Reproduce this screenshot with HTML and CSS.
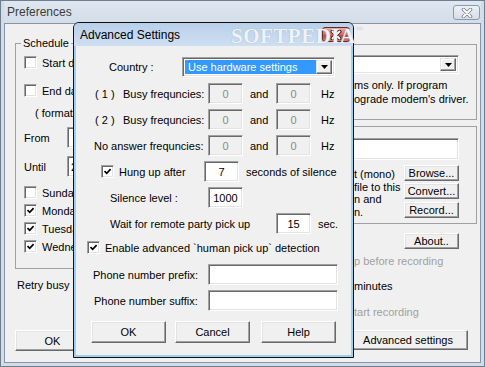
FILE: index.html
```html
<!DOCTYPE html>
<html>
<head>
  <title>Preferences</title>
  <link rel="stylesheet" href="styles.css">
</head>
<body>
  <!-- janela principal -->
  <div class="win main-win">
    <div class="titlebar">
      <span class="title title-off">Preferences</span>
      <span class="close close-off">
        <svg width="14" height="10" viewBox="0 0 14 10"><path d="M3.5 1.5 L10.5 8.5 M10.5 1.5 L3.5 8.5" stroke="#7d8794" stroke-width="3.6" stroke-linecap="round"/><path d="M3.5 1.5 L10.5 8.5 M10.5 1.5 L3.5 8.5" stroke="#fff" stroke-width="1.8" stroke-linecap="round"/></svg>
      </span>
    </div>
    <div class="win-body">
      <div class="cols">
        <div class="col-left">
          <fieldset class="group schedule">
            <legend>Schedule</legend>
            <div class="srow r-start"><span class="cb"></span><span class="lbl">Start date</span></div>
            <div class="srow r-end"><span class="cb"></span><span class="lbl">End date</span></div>
            <div class="srow r-format">( format</div>
            <div class="srow r-from"><span class="time-lbl">From</span><input class="field time" type="text" value=""></div>
            <div class="srow r-until"><span class="time-lbl">Until</span><input class="field time" type="text" value="23:59"></div>
            <div class="srow r-day"><span class="cb"></span><span class="lbl">Sunday</span></div>
            <div class="srow r-day2"><span class="cb"><svg width="7" height="7" viewBox="0 0 7 7"><path d="M0.5 3 L2.7 5.3 L6.6 1.2" fill="none" stroke="#000" stroke-width="1.7"/></svg></span><span class="lbl">Monday</span></div>
            <div class="srow r-day2"><span class="cb"><svg width="7" height="7" viewBox="0 0 7 7"><path d="M0.5 3 L2.7 5.3 L6.6 1.2" fill="none" stroke="#000" stroke-width="1.7"/></svg></span><span class="lbl">Tuesday</span></div>
            <div class="srow r-day2"><span class="cb"><svg width="7" height="7" viewBox="0 0 7 7"><path d="M0.5 3 L2.7 5.3 L6.6 1.2" fill="none" stroke="#000" stroke-width="1.7"/></svg></span><span class="lbl">Wednesday</span></div>
          </fieldset>
          <div class="retry">Retry busy</div>
        </div>

        <div class="col-right">
          <fieldset class="group modem">
            <div class="combo combo-modem">
              <span class="combo-val"></span>
              <span class="combo-arrow"><svg width="7" height="4" viewBox="0 0 7 4"><path d="M0 0 H7 L3.5 4 Z" fill="#000"/></svg></span>
            </div>
            <div class="note">
              <div>ms only. If program</div>
              <div>ograde modem's driver.</div>
            </div>
          </fieldset>
          <fieldset class="group sound">
            <input class="field wide" type="text" value="">
            <div class="sound-row">
              <div class="sound-text">
                <div>t (mono)</div>
                <div>file to this</div>
                <div>n and</div>
                <div>n.</div>
              </div>
              <div class="sound-btns">
                <button class="btn small b-browse">Browse...</button>
                <button class="btn small b-convert">Convert...</button>
                <button class="btn small b-record">Record...</button>
              </div>
            </div>
          </fieldset>
          <div class="about-row"><button class="btn small">About..</button></div>
          <div class="opt opt1 off">p before recording</div>
          <div class="opt opt2">minutes</div>
          <div class="opt opt3 off">tart recording</div>
        </div>
      </div>
      <div class="bottom-row">
        <button class="btn main-ok">OK</button>
        <button class="btn adv">Advanced settings</button>
      </div>
    </div>
  </div>

  <!-- dialogo de configuracoes avancadas -->
  <div class="win dialog">
    <div class="dlg-title">
      <span class="title">Advanced Settings</span>
      <span class="mark">SOFTPEDIA<sup>™</sup></span>
      <span class="close close-on">
        <svg width="14" height="10" viewBox="0 0 14 10"><path d="M3.5 1.5 L10.5 8.5 M10.5 1.5 L3.5 8.5" stroke="#4a1410" stroke-width="3.8" stroke-linecap="round"/><path d="M3.5 1.5 L10.5 8.5 M10.5 1.5 L3.5 8.5" stroke="#fff" stroke-width="2" stroke-linecap="round"/></svg>
      </span>
    </div>
    <div class="dlg-body">
      <div class="drow d-country">
        <span class="c-lbl">Country :</span>
        <div class="combo combo-country">
          <span class="combo-val sel">Use hardware settings</span>
          <span class="combo-arrow"><svg width="7" height="4" viewBox="0 0 7 4"><path d="M0 0 H7 L3.5 4 Z" fill="#000"/></svg></span>
        </div>
      </div>
      <div class="drow d-freq first">
        <span class="num">( 1 )</span><span class="f-lbl">Busy frequncies:</span>
        <input class="field sm" type="text" value="0" disabled>
        <span class="and">and</span>
        <input class="field sm" type="text" value="0" disabled>
        <span class="unit">Hz</span>
      </div>
      <div class="drow d-freq">
        <span class="num">( 2 )</span><span class="f-lbl">Busy frequncies:</span>
        <input class="field sm" type="text" value="0" disabled>
        <span class="and">and</span>
        <input class="field sm" type="text" value="0" disabled>
        <span class="unit">Hz</span>
      </div>
      <div class="drow d-noans">
        <span class="na-lbl">No answer frequncies:</span>
        <input class="field sm" type="text" value="0" disabled>
        <span class="and">and</span>
        <input class="field sm" type="text" value="0" disabled>
        <span class="unit">Hz</span>
      </div>
      <div class="drow d-hung">
        <span class="cb"><svg width="7" height="7" viewBox="0 0 7 7"><path d="M0.5 3 L2.7 5.3 L6.6 1.2" fill="none" stroke="#000" stroke-width="1.7"/></svg></span>
        <span class="h-lbl">Hung up after</span>
        <input class="field sm" type="text" value="7">
        <span class="and">seconds of silence</span>
      </div>
      <div class="drow d-silence">
        <span class="s-lbl">Silence level :</span>
        <input class="field sm" type="text" value="1000">
      </div>
      <div class="drow d-wait">
        <span class="w-lbl">Wait for remote party pick up</span>
        <input class="field sm" type="text" value="15">
        <span class="and">sec.</span>
      </div>
      <div class="drow d-enable">
        <span class="cb"><svg width="7" height="7" viewBox="0 0 7 7"><path d="M0.5 3 L2.7 5.3 L6.6 1.2" fill="none" stroke="#000" stroke-width="1.7"/></svg></span>
        <span class="e-lbl">Enable advanced `human pick up` detection</span>
      </div>
      <div class="drow d-prefix">
        <span class="p-lbl">Phone number prefix:</span>
        <input class="field long" type="text" value="">
      </div>
      <div class="drow d-suffix">
        <span class="p-lbl">Phone number suffix:</span>
        <input class="field long" type="text" value="">
      </div>
      <div class="drow d-buttons">
        <button class="btn dbtn">OK</button>
        <button class="btn dbtn b-cancel">Cancel</button>
        <button class="btn dbtn b-help">Help</button>
      </div>
    </div>
  </div>
</body>
</html>
```

FILE: styles.css
```css
body {
  margin: 0;
  font-family: "Liberation Sans", Arial, sans-serif;
  font-size: 11px;
  color: #000;
  background: #fff;
}

.win {
  box-sizing: border-box;
}

/* janela principal */
.main-win {
  width: 485px;
  height: 367px;
  border: 1px solid #6f7e8e;
  background: #d3dde8;
  padding: 0 3px 3px;
  display: flex;
  flex-direction: column;
}

.titlebar {
  height: 22px;
  display: flex;
  align-items: center;
  justify-content: space-between;
  padding: 0 1px 0 3px;
  background: linear-gradient(#dfe7f0, #d3dde8);
}

.title {
  font-size: 12px;
}

.title-off {
  color: #3c3c3c;
}

.close {
  width: 27px;
  height: 15px;
  box-sizing: border-box;
  border-radius: 3px;
  display: flex;
  align-items: center;
  justify-content: center;
}

.close-off {
  border: 1px solid #8c99a8;
  background: linear-gradient(#eef2f6, #d5dde7);
  margin-top: 1px;
}

.close-on {
  width: 28px;
  border: 1px solid #6e2620;
  background: linear-gradient(#e7b0a5, #cf6a5c 50%, #c0453a 51%, #d67a64);
}

.win-body {
  flex: 1;
  background: #f0f0f0;
  border: 1px solid #8595a7;
  display: flex;
  flex-direction: column;
}

.cols {
  display: flex;
  height: 306px;
}

.col-left {
  flex: none;
  width: 180px;
  padding: 13px 0 0 10px;
}

.col-right {
  flex: 1;
  min-width: 0;
  padding: 13px 3px 0 10px;
}

fieldset.group {
  margin: 0;
  padding: 0;
  border: 1px solid #a0a0a0;
  min-width: 0;
}

fieldset.group legend {
  margin-left: 5px;
  padding: 0 2px;
  line-height: 13px;
}

.schedule {
  padding-bottom: 15px !important;
}

/* as linhas terminam debaixo do dialogo */
.srow {
  display: flex;
  align-items: center;
  width: 59px;
  height: 13px;
  padding-left: 8px;
  white-space: nowrap;
  overflow: hidden;
}

.srow .lbl {
  margin-left: 5px;
}

.r-start { margin-top: 6px; }
.r-end { margin-top: 15px; }
.r-format { margin-top: 9px; padding-left: 19px; width: 40px; }
.r-from { margin-top: 8px; height: 21px; }
.r-until { margin-top: 8px; height: 21px; }
.r-day { margin-top: 9px; }
.r-day2 { margin-top: 5px; }

.time-lbl {
  flex: none;
  width: 43px;
}

.retry {
  width: 58px;
  margin-top: 10px;
  padding-left: 2px;
  line-height: 13px;
  white-space: nowrap;
  overflow: hidden;
}

/* controles classicos */
.cb {
  width: 13px;
  height: 13px;
  box-sizing: border-box;
  background: #fff;
  border: 1px solid;
  border-color: #a0a0a0 #fff #fff #a0a0a0;
  box-shadow: inset 1px 1px #696969, inset -1px -1px #e3e3e3;
  display: flex;
  align-items: center;
  justify-content: center;
  flex: none;
}

.field {
  box-sizing: border-box;
  height: 21px;
  margin: 0;
  padding: 0 3px;
  font: inherit;
  color: #000;
  background: #fff;
  border: 1px solid;
  border-color: #a0a0a0 #fff #fff #a0a0a0;
  box-shadow: inset 1px 1px #696969, inset -1px -1px #e3e3e3;
  outline: none;
  flex: none;
}

.field:disabled {
  background: #f0f0f0;
  color: #8a8a8a;
}

.field.time {
  width: 120px;
}

.field.sm {
  width: 35px;
  text-align: center;
}

.field.long {
  width: 130px;
}

.field.wide {
  display: block;
  width: 100%;
  height: 22px;
  margin-top: 11px;
}

.btn {
  box-sizing: border-box;
  margin: 0;
  padding: 0;
  font: inherit;
  color: #000;
  background: #f0f0f0;
  border: 1px solid;
  border-color: #fff #696969 #696969 #fff;
  box-shadow: inset -1px -1px #a0a0a0, inset 1px 1px #e3e3e3;
  flex: none;
}

.btn.small {
  display: block;
  width: 55px;
  height: 16px;
  line-height: 13px;
}

.combo {
  display: flex;
  box-sizing: border-box;
  background: #fff;
  border: 1px solid;
  border-color: #a0a0a0 #fff #fff #a0a0a0;
  box-shadow: inset 1px 1px #696969, inset -1px -1px #e3e3e3;
  padding: 2px;
}

.combo-val {
  flex: 1;
  line-height: 15px;
  padding-left: 3px;
  white-space: nowrap;
  overflow: hidden;
}

.combo-val.sel {
  background: #3399ff;
  color: #fff;
}

.combo-arrow {
  width: 16px;
  box-sizing: border-box;
  background: #f0f0f0;
  border: 1px solid;
  border-color: #e3e3e3 #696969 #696969 #e3e3e3;
  box-shadow: inset -1px -1px #a0a0a0, inset 1px 1px #fff;
  display: flex;
  align-items: center;
  justify-content: center;
}

/* grupos da direita */
.modem,
.sound {
  padding-right: 17px !important;
}

.modem {
  margin-top: 7px !important;
}

.sound {
  margin-top: 6px !important;
}

.combo-modem {
  height: 19px;
  margin-top: 10px;
}

.note {
  margin-top: 4px;
  padding-left: 148px;
  line-height: 14px;
  white-space: nowrap;
  padding-bottom: 13px;
}

.sound-row {
  display: flex;
  justify-content: space-between;
  padding-bottom: 5px;
}

.sound-text {
  flex: none;
  padding-left: 148px;
  padding-top: 8px;
  line-height: 12.5px;
  white-space: nowrap;
}

.sound-btns {
  flex: none;
}

.b-browse { margin-top: 5px; }
.b-convert { margin-top: 2px; }
.b-record { margin-top: 3px; }

.about-row {
  display: flex;
  justify-content: flex-end;
  margin-top: 9px;
  padding-right: 18px;
}

.opt {
  padding-left: 149px;
  line-height: 13px;
  white-space: nowrap;
}

.opt.off {
  color: #a0a0a0;
}

.opt1 { margin-top: 6px; }
.opt2 { margin-top: 12px; }
.opt3 { margin-top: 13px; }

.bottom-row {
  display: flex;
  justify-content: space-between;
  padding: 0 12px 0 10px;
}

.main-ok {
  width: 75px;
  height: 21px;
}

.adv {
  width: 120px;
  height: 20px;
}

/* dialogo */
.dialog {
  position: absolute;
  left: 73px;
  top: 22px;
  width: 281px;
  height: 336px;
  border: 1px solid #111;
  border-radius: 6px 6px 0 0;
  background: #9fd0f2;
  padding: 0 2px 2px;
  display: flex;
  flex-direction: column;
}

.dlg-title {
  position: relative;
  height: 23px;
  margin: 0 -2px;
  padding: 0 3px 0 6px;
  border-radius: 5px 5px 0 0;
  display: flex;
  align-items: center;
  justify-content: space-between;
  background: linear-gradient(#b9d0ea, #cfdff1);
}

.mark {
  position: absolute;
  left: 157px;
  top: 4px;
  font-family: "Liberation Serif", serif;
  font-size: 21px;
  line-height: 18px;
  font-weight: bold;
  color: #eef3f9;
  text-shadow: 0 0 1px #8ea2b8;
  letter-spacing: 0.5px;
  white-space: nowrap;
}

.mark sup {
  font-size: 7px;
  line-height: 7px;
  font-weight: normal;
  vertical-align: top;
}

.dlg-body {
  flex: 1;
  background: #f0f0f0;
}

.drow {
  display: flex;
  align-items: center;
  height: 21px;
  white-space: nowrap;
}

.d-country {
  margin-top: 11px;
  height: 20px;
  padding-left: 33px;
}

.c-lbl {
  width: 73px;
}

.combo-country {
  width: 153px;
  height: 20px;
}

.d-freq,
.d-noans,
.d-hung,
.d-silence,
.d-wait {
  margin-top: 5px;
}

.d-freq.first {
  margin-top: 6px;
}

.d-freq {
  padding-left: 19px;
}

.num {
  width: 28px;
}

.f-lbl {
  width: 85px;
}

.and {
  width: 26px;
  padding-left: 7px;
}

.unit {
  padding-left: 10px;
}

.d-noans {
  padding-left: 18px;
}

.na-lbl {
  width: 114px;
}

.d-hung {
  padding-left: 25px;
}

.h-lbl {
  margin-left: 5px;
  width: 85px;
}

.d-silence,
.d-wait {
  padding-left: 34px;
}

.s-lbl {
  width: 98px;
}

.w-lbl {
  width: 166px;
}

.d-enable {
  margin-top: 7px;
  height: 13px;
  padding-left: 11px;
}

.e-lbl {
  margin-left: 5px;
}

.d-prefix {
  margin-top: 10px;
  padding-left: 17px;
}

.d-suffix {
  margin-top: 5px;
  padding-left: 18px;
}

.d-suffix .p-lbl {
  width: 114px;
}

.p-lbl {
  width: 115px;
}

.d-buttons {
  margin-top: 10px;
  height: 22px;
  padding-left: 15px;
}

.dbtn {
  width: 75px;
  height: 22px;
}

.b-cancel {
  margin-left: 9px;
}

.b-help {
  margin-left: 11px;
}
```
